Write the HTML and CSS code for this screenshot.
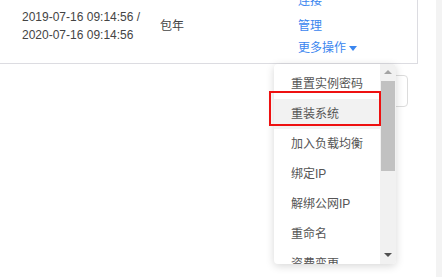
FILE: index.html
```html
<!DOCTYPE html>
<html>
<head>
<meta charset="utf-8">
<title>实例列表</title>
<link rel="stylesheet" href="styles.css">
</head>
<body>
<div class="page">
  <div class="main">
    <div class="tablebox">
      <div class="row">
        <div class="cell c-date">2019-07-16 09:14:56 /<br>2020-07-16 09:14:56</div>
        <div class="cell c-pay">包年</div>
        <div class="cell c-ops">
          <a href="#" class="first">连接</a>
          <a href="#">管理</a>
          <a href="#" class="more">更多操作 <span class="caret"></span></a>
        </div>
      </div>
    </div>
    <div class="below">
      <div class="pager"></div>
    </div>
  </div>
  <div class="pagebar"></div>
</div>

<div class="dropdown">
  <ul class="menu">
    <li>重置实例密码</li>
    <li class="hover">重装系统</li>
    <li>加入负载均衡</li>
    <li>绑定IP</li>
    <li>解绑公网IP</li>
    <li>重命名</li>
    <li>资费变更</li>
  </ul>
  <div class="sbar">
    <span class="arr up"></span>
    <div class="thumb"></div>
    <span class="arr down"></span>
  </div>
</div>
<div class="mark"></div>
</body>
</html>
```

FILE: styles.css
```css
body {margin: 0; font-family: "Liberation Sans", "Noto Sans CJK SC", sans-serif; font-size: 12px; color: #444; background: #fff;}
.page {display: flex; height: 277px; overflow: hidden;}
.main {width: 436px;}
.pagebar {width: 6px; background: #f3f3f3;}

.tablebox {width: 417px; height: 63px; border-right: 1px solid #dcdce1; border-bottom: 1px solid #dcdce1; overflow: hidden;}
.row {display: flex; align-items: center; height: 70px; margin-top: -9px;}
.c-date {width: 138px; padding-left: 22px; line-height: 18px;}
.c-pay {width: 138px; line-height: 22px;}
.c-ops {display: flex; flex-direction: column; line-height: 22px;}
.c-ops a {color: #3a86ef; text-decoration: none;}
.c-ops a.first {margin-top: -3px; margin-bottom: 3px;}
.caret {display: inline-block; width: 0; height: 0; border-left: 4px solid transparent; border-right: 4px solid transparent; border-top: 5px solid #3a86ef; vertical-align: middle; margin-left: 0;}

.below {display: flex; padding-top: 11px;}
.pager {width: 40px; height: 30px; margin-left: 366px; border: 1px solid #dcdcdc; border-radius: 4px;}

.dropdown {position: absolute; left: 274px; top: 64px; width: 122px; height: 200px; display: flex; background: #fff; border-radius: 4px; box-shadow: 0 2px 8px rgba(0,0,0,0.16); overflow: hidden;}
.menu {list-style: none; margin: 0; padding: 5px 0 0 0; flex: 1; color: #555;}
.menu li {height: 30px; line-height: 30px; padding-left: 17px; white-space: nowrap;}
.menu li.hover {background: #f2f2f2;}

.sbar {width: 16px; background: #f1f1f1; position: relative;}
.thumb {position: absolute; left: 1px; right: 1px; top: 17px; height: 90px; background: #c1c1c1;}
.arr {position: absolute; left: 4px; width: 0; height: 0; border-left: 4px solid transparent; border-right: 4px solid transparent;}
.arr.up {top: 6px; border-bottom: 4px solid #a3a3a3;}
.arr.down {bottom: 7px; border-top: 4px solid #505050;}

.mark {position: absolute; left: 269px; top: 91px; width: 108px; height: 31px; border: 2px solid #ee1111;}
```
